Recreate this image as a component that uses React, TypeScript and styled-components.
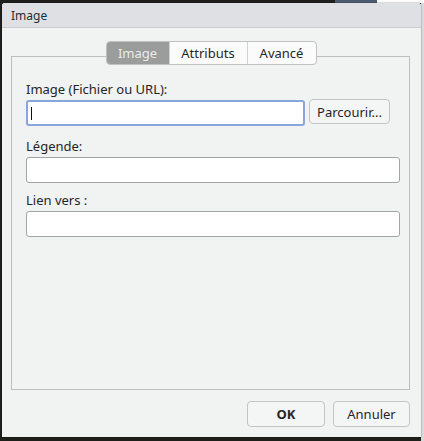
import React from "react";
import styled, { createGlobalStyle } from "styled-components";

const Global = createGlobalStyle`
  html, body { margin: 0; padding: 0; }
  body {
    width: 424px;
    height: 441px;
    overflow: hidden;
    background:
      linear-gradient(#fcfcfc, #fcfcfc) no-repeat 377px 0 / 47px 3px,
      linear-gradient(#4b5d70, #4b5d70) no-repeat 335px 0 / 42px 3px,
      linear-gradient(#d9dadc, #d9dadc) no-repeat 421px 0 / 3px 441px,
      #1e1f1b;
    font-family: "Noto Sans", "DejaVu Sans", sans-serif;
    color: #232629;
  }
`;

const Dialog = styled.div`
  margin: 3px 3px 0 2px;
  width: 419px;
  height: 434px;
  display: flex;
  flex-direction: column;
  background: #f1f2f2;
  border-radius: 3px 3px 0 0;
  overflow: hidden;
  box-shadow: 0 0 0 0.5px rgba(0, 0, 0, 0.25);
`;

const TitleBar = styled.div`
  height: 24px;
  flex: none;
  display: flex;
  align-items: center;
  padding-left: 9px;
  background: #dfe0e3;
  border-bottom: 1px solid #cbccd0;
  font-size: 12px;
  color: #2a2c2f;
`;

const Body = styled.div`
  flex: 1;
  display: flex;
  flex-direction: column;
  padding: 13px 11px 10px 9px;
`;

const TabBar = styled.div`
  position: relative;
  z-index: 1;
  align-self: center;
  display: flex;
  height: 24px;
  box-sizing: border-box;
  border: 1px solid #bfc0c1;
  border-radius: 4px;
  background: #fbfbfb;
  overflow: hidden;
  margin-left: 1px;
`;

const Tab = styled.div<{ $active?: boolean; $w: number }>`
  width: ${(p) => p.$w}px;
  display: flex;
  align-items: center;
  justify-content: center;
  font-size: 13px;
  background: ${(p) => (p.$active ? "#9b9c9c" : "transparent")};
  color: ${(p) => (p.$active ? "#ebebeb" : "#232629")};
  & + & {
    border-left: 1px solid #d0d1d2;
  }
`;

const Frame = styled.div`
  flex: 1;
  margin-top: -9px;
  border: 1px solid #bdbebe;
  display: flex;
  flex-direction: column;
  padding: 23px 9px 0 14px;
`;

const Label = styled.div<{ $gap?: number }>`
  font-size: 13px;
  line-height: 18px;
  margin-top: ${(p) => p.$gap ?? 0}px;
  margin-bottom: 2px;
`;

const Row = styled.div`
  display: flex;
  gap: 4px;
  margin-right: 10px;
  align-items: flex-start;
`;

const Field = styled.div<{ $focus?: boolean }>`
  flex: 1;
  height: 26px;
  box-sizing: border-box;
  background: #fff;
  border: ${(p) => (p.$focus ? "2px solid #86a6dd" : "1px solid #a3a4a5")};
  border-radius: 3px;
  display: flex;
  align-items: center;
  padding-left: ${(p) => (p.$focus ? 3 : 4)}px;
`;

const TextField = styled(Field)`
  flex: none;
`;

const Caret = styled.span`
  width: 1px;
  height: 13px;
  background: #111;
`;

const Button = styled.div<{ $w: number; $bold?: boolean }>`
  width: ${(p) => p.$w}px;
  height: 26px;
  box-sizing: border-box;
  border: 1px solid #c3c4c5;
  border-radius: 4px;
  background: #f4f5f5;
  display: flex;
  align-items: center;
  justify-content: center;
  font-size: 13px;
  font-weight: ${(p) => (p.$bold ? 700 : 400)};
  color: #232629;
`;

const BrowseButton = styled(Button)`
  height: 25px;
  margin-top: -1px;
`;

const Footer = styled.div`
  display: flex;
  justify-content: flex-end;
  gap: 8px;
  margin-top: 11px;
`;

export default function App() {
  return (
    <>
      <Global />
      <Dialog>
        <TitleBar>Image</TitleBar>
        <Body>
          <TabBar>
            <Tab $active $w={62}>Image</Tab>
            <Tab $w={77}>Attributs</Tab>
            <Tab $w={68}>Avancé</Tab>
          </TabBar>
          <Frame>
            <Label>Image (Fichier ou URL):</Label>
            <Row>
              <Field $focus>
                <Caret />
              </Field>
              <BrowseButton $w={81}>Parcourir...</BrowseButton>
            </Row>
            <Label $gap={11}>Légende:</Label>
            <TextField />
            <Label $gap={8}>Lien vers :</Label>
            <TextField />
          </Frame>
          <Footer>
            <Button $w={78} $bold>OK</Button>
            <Button $w={77}>Annuler</Button>
          </Footer>
        </Body>
      </Dialog>
    </>
  );
}
